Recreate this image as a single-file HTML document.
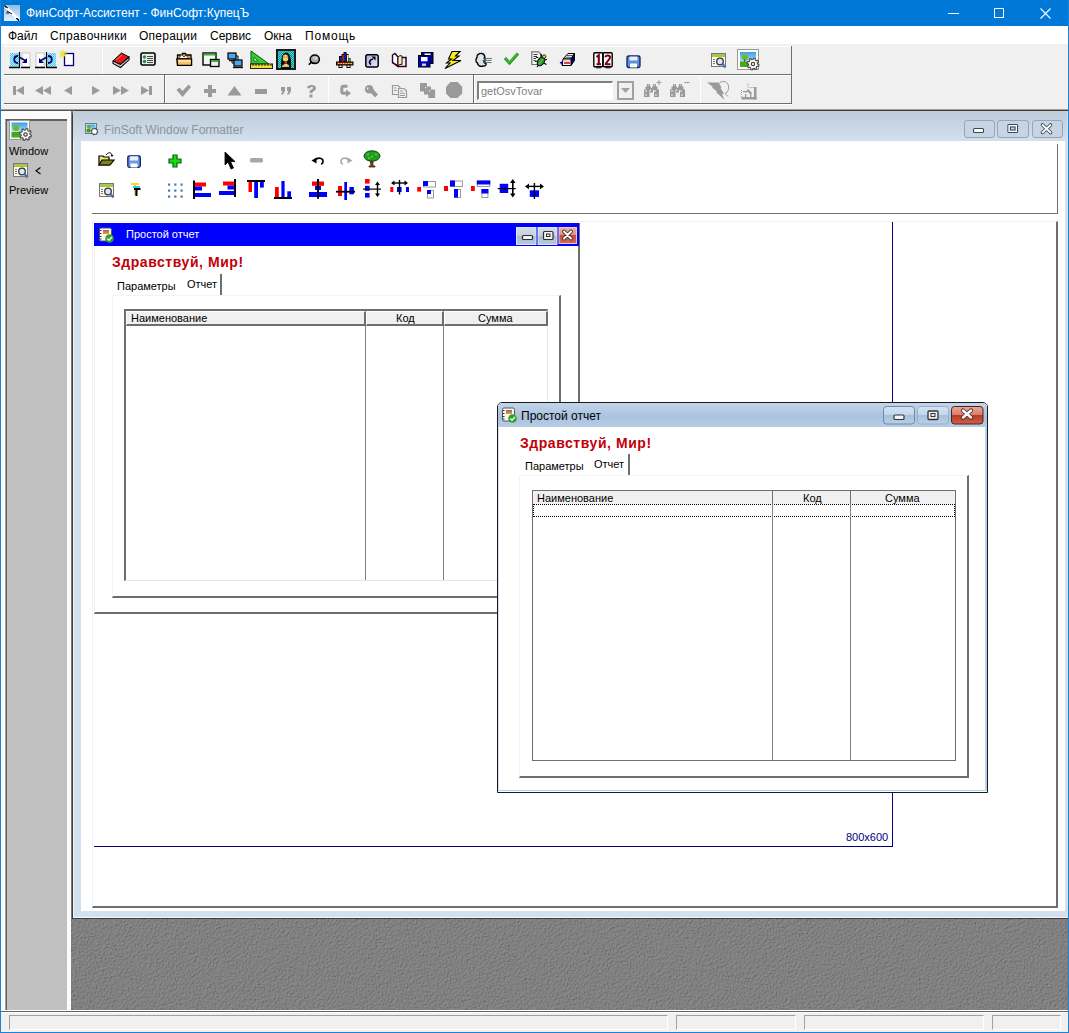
<!DOCTYPE html>
<html><head><meta charset="utf-8">
<style>
*{margin:0;padding:0;box-sizing:border-box}
html,body{width:1069px;height:1033px;overflow:hidden;background:#F0F0F0;font-family:"Liberation Sans",sans-serif;font-size:12px;color:#000}
.a{position:absolute}
.t{position:absolute;white-space:nowrap;line-height:1}
svg{position:absolute;overflow:visible}
</style></head><body>
<svg width="0" height="0" style="position:absolute"><defs><linearGradient id="sky" x1="0" y1="0" x2="0" y2="1"><stop offset="0" stop-color="#3AA0E0"/><stop offset="0.6" stop-color="#A8DCF4"/><stop offset="1" stop-color="#D8F0FA"/></linearGradient></defs></svg>
<!-- main window frame -->
<div class="a" style="left:0;top:0;width:1069px;height:26px;background:#0078D7"></div>
<div class="a" style="left:0;top:0;width:1px;height:1033px;background:#1883D7"></div>
<div class="a" style="left:1068px;top:0;width:1px;height:1033px;background:#1883D7"></div>
<div class="a" style="left:0;top:1032px;width:1069px;height:1px;background:#1883D7"></div>
<!-- title -->
<div class="t" style="left:26px;top:7px;font-size:12px;color:#fff">ФинСофт-Ассистент - ФинСофт:КупецЪ</div>
<!-- caption buttons -->
<div class="a" style="left:948px;top:13px;width:11px;height:1px;background:#fff"></div>
<div class="a" style="left:994px;top:8px;width:10px;height:10px;border:1px solid #fff"></div>
<svg style="left:1040px;top:8px" width="11" height="11"><path d="M0.5 0.5L10.5 10.5M10.5 0.5L0.5 10.5" stroke="#fff" stroke-width="1.1"/></svg>
<!-- menu -->
<div class="a" style="left:1px;top:26px;width:1067px;height:18px;background:#fff"></div>
<div class="t" style="left:8px;top:30px">Файл</div>
<div class="t" style="left:50px;top:30px;letter-spacing:0.4px">Справочники</div>
<div class="t" style="left:139px;top:30px;letter-spacing:0.25px">Операции</div>
<div class="t" style="left:210px;top:30px">Сервис</div>
<div class="t" style="left:264px;top:30px">Окна</div>
<div class="t" style="left:305px;top:30px;letter-spacing:0.8px">Помощь</div>

<!-- toolbars -->
<div class="a" style="left:4px;top:46px;width:788px;height:1px;background:#fff"></div>
<div class="a" style="left:4px;top:74px;width:788px;height:1px;background:#6E6E6E"></div>
<div class="a" style="left:4px;top:75px;width:788px;height:1px;background:#fff"></div>
<div class="a" style="left:4px;top:103px;width:788px;height:1px;background:#6E6E6E"></div>
<div class="a" style="left:4px;top:104px;width:788px;height:1px;background:#fff"></div>
<div class="a" style="left:791px;top:46px;width:1px;height:58px;background:#6E6E6E"></div>
<div class="a" style="left:164px;top:75px;width:1px;height:28px;background:#6E6E6E"></div>
<div class="a" style="left:165px;top:75px;width:1px;height:28px;background:#fff"></div>
<div class="a" style="left:473px;top:75px;width:1px;height:28px;background:#6E6E6E"></div>
<div class="a" style="left:474px;top:75px;width:1px;height:28px;background:#fff"></div>
<div class="a" style="left:102px;top:47px;width:1px;height:27px;background:#fff"></div>
<div class="a" style="left:328px;top:76px;width:1px;height:27px;background:#fff"></div>
<div class="a" style="left:700px;top:76px;width:1px;height:27px;background:#fff"></div>
<!-- combo -->
<div class="a" style="left:477px;top:81px;width:136px;height:19px;background:#fff;border-top:2px solid #808080;border-left:2px solid #808080;border-bottom:1px solid #fff;border-right:1px solid #fff"></div>
<div class="t" style="left:481px;top:86px;font-size:11px;color:#808080">getOsvTovar</div>
<div class="a" style="left:617px;top:81px;width:17px;height:19px;border:2px solid #A0A0A0;background:#F0F0F0"></div>
<svg style="left:621px;top:88px" width="9" height="5"><path d="M0 0H9L4.5 5Z" fill="#A0A0A0"/></svg>

<!-- MDI top line -->
<div class="a" style="left:1px;top:109px;width:1067px;height:1px;background:#A0A0A0"></div>
<div class="a" style="left:1px;top:110px;width:1067px;height:1px;background:#555"></div>

<!-- left panel -->
<div class="a" style="left:1px;top:111px;width:70px;height:900px;background:#FBFBFB"></div>
<div class="a" style="left:5px;top:119px;width:62px;height:891px;background:#C0C0C0;border-top:1px solid #606060;border-left:1px solid #A0A0A0;box-shadow:inset 1px 1px 0 #606060"></div>
<div class="t" style="left:9px;top:146px;font-size:11px">Window</div>
<div class="t" style="left:9px;top:185px;font-size:11px">Preview</div>
<svg style="left:35px;top:167px" width="6" height="8"><path d="M5.5 0.5L1 3.8L5.5 7" stroke="#000" stroke-width="1.1" fill="none"/></svg>

<!-- MDI client background -->
<div class="a" style="left:71px;top:111px;width:997px;height:900px;background:#7E7E7E"></div>
<svg style="left:71px;top:111px" width="997" height="900"><filter id="tx" x="0" y="0" width="100%" height="100%" color-interpolation-filters="sRGB"><feTurbulence type="fractalNoise" baseFrequency="0.65" numOctaves="3" seed="3" result="n"/><feDiffuseLighting in="n" lighting-color="#fff" surfaceScale="1.6" diffuseConstant="1" result="l"><feDistantLight azimuth="225" elevation="55"/></feDiffuseLighting><feColorMatrix type="matrix" values="0.24 0 0 0 0.31  0.24 0 0 0 0.31  0.24 0 0 0 0.31  0 0 0 0 1"/></filter><rect width="996" height="900" filter="url(#tx)"/></svg>

<!-- child window FinSoft Window Formatter -->
<div class="a" style="left:71px;top:112px;width:1px;height:807px;background:#7A7A7A"></div>
<div class="a" id="cw" style="left:72px;top:110px;width:996px;height:809px;background:#D3E0EE;border-left:1px solid #3C3C3C;border-top:1px solid #3C3C3C;border-bottom:1px solid #3C3C3C;border-top-left-radius:5px;box-shadow:inset 1px 0 0 #F4F8FC, inset 0 -1px 0 #F4F8FC"></div>
<div class="a" style="left:73px;top:111px;width:994px;height:30px;background:linear-gradient(#BFCCDA,#D3DFEC)"></div>
<div class="t" style="left:104px;top:124px;font-size:12px;color:#8A95A0">FinSoft Window Formatter</div>
<!-- child buttons -->
<div class="a" style="left:964px;top:120px;width:31px;height:18px;border:1px solid #93A6BC;border-radius:3px;background:#C6D4E3"></div>
<div class="a" style="left:997px;top:120px;width:32px;height:18px;border:1px solid #93A6BC;border-radius:3px;background:#C6D4E3"></div>
<div class="a" style="left:1032px;top:120px;width:31px;height:18px;border:1px solid #93A6BC;border-radius:3px;background:#C6D4E3"></div>
<svg style="left:972px;top:123px" width="90" height="12">
 <rect x="1.5" y="5.5" width="10" height="4" rx="1" fill="#fff" stroke="#3C4652" stroke-width="1.1"/>
 <rect x="36" y="1.5" width="9.5" height="8" rx="1" fill="none" stroke="#3C4652" stroke-width="1.2"/><rect x="37" y="2.5" width="7.5" height="6" fill="none" stroke="#fff" stroke-width="1"/><rect x="38.5" y="4" width="4.5" height="3" fill="none" stroke="#3C4652" stroke-width="1"/>
 <path d="M70.5 2L78.5 9.5M78.5 2L70.5 9.5" stroke="#3C4652" stroke-width="3.6" stroke-linecap="round"/><path d="M70.5 2L78.5 9.5M78.5 2L70.5 9.5" stroke="#fff" stroke-width="1.8" stroke-linecap="round"/>
</svg>

<!-- child content -->
<div class="a" style="left:81px;top:141px;width:984px;height:770px;background:#fff"></div>
<!-- toolbar panel border -->
<div class="a" style="left:92px;top:213px;width:966px;height:1px;background:#6E6E6E"></div>
<div class="a" style="left:1057px;top:144px;width:1px;height:70px;background:#6E6E6E"></div>
<!-- design area border -->
<div class="a" style="left:92px;top:221px;width:966px;height:687px;border-right:2px solid #6E6E6E;border-bottom:2px solid #6E6E6E;border-top:1px solid #F2F2F2;border-left:1px solid #F2F2F2"></div>

<!-- canvas lines 800x600 -->
<div class="a" style="left:892px;top:222px;width:1px;height:625px;background:#000080"></div>
<div class="a" style="left:94px;top:846px;width:799px;height:1px;background:#000080"></div>
<div class="t" style="left:846px;top:832px;font-size:11px;color:#000080">800x600</div>

<!-- FORM 1 (design) -->
<div class="a" style="left:94px;top:223px;width:486px;height:391px;background:#fff;border-left:1px solid #F4F4F4;border-right:2px solid #6E6E6E;border-bottom:2px solid #6E6E6E"></div>
<div class="a" style="left:94px;top:223px;width:485px;height:23px;background:#0000FF"></div>
<div class="t" style="left:126px;top:229px;font-size:11px;color:#fff">Простой отчет</div>
<svg style="left:516px;top:227px" width="62" height="18">
 <defs><linearGradient id="b1" x1="0" y1="0" x2="0" y2="1"><stop offset="0" stop-color="#D2DEEA"/><stop offset="0.5" stop-color="#C2D0DE"/><stop offset="0.5" stop-color="#A9BBCF"/><stop offset="1" stop-color="#B8C8DA"/></linearGradient>
 <linearGradient id="b2" x1="0" y1="0" x2="0" y2="1"><stop offset="0" stop-color="#E8B0A8"/><stop offset="0.5" stop-color="#DC9080"/><stop offset="0.5" stop-color="#C4503A"/><stop offset="1" stop-color="#D06A58"/></linearGradient></defs>
 <rect x="0.5" y="0.5" width="19.5" height="17" fill="url(#b1)" stroke="#DDE8F4" stroke-width="1"/>
 <rect x="22" y="0.5" width="19" height="17" fill="url(#b1)" stroke="#DDE8F4" stroke-width="1"/>
 <rect x="43" y="0.5" width="17.5" height="16" fill="url(#b2)" stroke="#F0C8C8" stroke-width="1"/>
 <rect x="6.5" y="8.5" width="10" height="4" rx="1" fill="#F4F4F4" stroke="#2E2E2E" stroke-width="1.2"/>
 <rect x="27.5" y="4.5" width="9.5" height="8" rx="1" fill="#F4F4F4" stroke="#2E2E2E" stroke-width="1.2"/><rect x="30.5" y="7" width="3.5" height="2.5" fill="none" stroke="#2E2E2E" stroke-width="1"/>
 <path d="M48 4.5L55 11.5M55 4.5L48 11.5" stroke="#3A2A2A" stroke-width="3.8" stroke-linecap="round"/><path d="M48 4.5L55 11.5M55 4.5L48 11.5" stroke="#fff" stroke-width="2" stroke-linecap="round"/>
</svg>
<div class="t" style="left:112px;top:255px;font-size:14px;font-weight:bold;color:#C40008;letter-spacing:0.55px">Здравствуй, Мир!</div>
<div class="t" style="left:117px;top:281px;font-size:11px">Параметры</div>
<div class="t" style="left:187px;top:279px;font-size:11px">Отчет</div>
<div class="a" style="left:220px;top:274px;width:2px;height:21px;background:#6E6E6E"></div>
<div class="a" style="left:112px;top:295px;width:449px;height:303px;border-right:2px solid #6E6E6E;border-bottom:2px solid #6E6E6E;border-top:1px solid #F4F4F4;border-left:1px solid #F4F4F4"></div>
<!-- grid1 -->
<div class="a" style="left:124px;top:309px;width:424px;height:272px;border-left:2px solid #6E6E6E;border-top:2px solid #6E6E6E;border-right:1px solid #E8E8E8;border-bottom:1px solid #E8E8E8"></div>
<div class="a" style="left:126px;top:311px;width:240px;height:15px;background:#F0F0F0;border-right:2px solid #6E6E6E;border-bottom:2px solid #6E6E6E;border-top:1px solid #fff;border-left:1px solid #fff"></div>
<div class="a" style="left:366px;top:311px;width:78px;height:15px;background:#F0F0F0;border-right:2px solid #6E6E6E;border-bottom:2px solid #6E6E6E;border-top:1px solid #fff;border-left:1px solid #fff"></div>
<div class="a" style="left:444px;top:311px;width:104px;height:15px;background:#F0F0F0;border-right:2px solid #6E6E6E;border-bottom:2px solid #6E6E6E;border-top:1px solid #fff;border-left:1px solid #fff"></div>
<div class="t" style="left:131px;top:313px;font-size:11px">Наименование</div>
<div class="t" style="left:396px;top:313px;font-size:11px">Код</div>
<div class="t" style="left:478px;top:313px;font-size:11px">Сумма</div>
<div class="a" style="left:365px;top:326px;width:1px;height:254px;background:#808080"></div>
<div class="a" style="left:443px;top:326px;width:1px;height:254px;background:#808080"></div>

<!-- FORM 2 -->
<div class="a" style="left:497px;top:402px;width:491px;height:391px;background:#fff;border:1px solid #1A1A1A;border-top-left-radius:5px;border-top-right-radius:5px"></div>
<div class="a" style="left:498px;top:403px;width:489px;height:24px;background:linear-gradient(#C3D5EA,#A9C2DE 60%,#B7CDE6);border-top-left-radius:4px;border-top-right-radius:4px"></div>
<div class="a" style="left:498px;top:427px;width:489px;height:364px;border-left:1px solid #D8DCF0;border-right:2px solid #B9D1EA;border-bottom:1px solid #9FE0F0"></div>
<div class="t" style="left:521px;top:410px;font-size:12px;color:#000">Простой отчет</div>
<svg style="left:883px;top:406px" width="101" height="19">
 <defs><linearGradient id="b3" x1="0" y1="0" x2="0" y2="1"><stop offset="0" stop-color="#D4E3F3"/><stop offset="0.5" stop-color="#C2D6EC"/><stop offset="0.5" stop-color="#A6C0DC"/><stop offset="1" stop-color="#B8CFE8"/></linearGradient>
 <linearGradient id="b4" x1="0" y1="0" x2="0" y2="1"><stop offset="0" stop-color="#E8A898"/><stop offset="0.5" stop-color="#D87C68"/><stop offset="0.5" stop-color="#B83A22"/><stop offset="1" stop-color="#D0604A"/></linearGradient></defs>
 <rect x="0.5" y="0.5" width="31" height="17.5" rx="3" fill="url(#b3)" stroke="#7088A8" stroke-width="1"/>
 <rect x="34.5" y="0.5" width="31" height="17.5" rx="3" fill="url(#b3)" stroke="#98B0CC" stroke-width="1"/>
 <rect x="68.5" y="0.5" width="31.5" height="17.5" rx="3" fill="url(#b4)" stroke="#4A2418" stroke-width="1"/>
 <rect x="11" y="9" width="10" height="4.5" rx="1" fill="#F4F4F4" stroke="#333" stroke-width="1.2"/>
 <rect x="45" y="5" width="10" height="8.5" rx="1" fill="#EEE" stroke="#333" stroke-width="1.3"/><rect x="48" y="7.5" width="4" height="3" fill="none" stroke="#333" stroke-width="1"/>
 <path d="M80 4.5L88 11.5M88 4.5L80 11.5" stroke="#4A2A2A" stroke-width="4.2" stroke-linecap="round"/><path d="M80 4.5L88 11.5M88 4.5L80 11.5" stroke="#fff" stroke-width="2.4" stroke-linecap="round"/>
</svg>
<div class="t" style="left:520px;top:436px;font-size:14px;font-weight:bold;color:#C40008;letter-spacing:0.55px">Здравствуй, Мир!</div>
<div class="t" style="left:525px;top:461px;font-size:11px">Параметры</div>
<div class="t" style="left:594px;top:459px;font-size:11px">Отчет</div>
<div class="a" style="left:628px;top:454px;width:2px;height:21px;background:#6E6E6E"></div>
<div class="a" style="left:519px;top:475px;width:450px;height:303px;border-right:2px solid #6E6E6E;border-bottom:2px solid #6E6E6E;border-top:1px solid #F4F4F4;border-left:1px solid #F4F4F4"></div>
<!-- grid2 -->
<div class="a" style="left:532px;top:490px;width:424px;height:271px;border:1px solid #6E6E6E"></div>
<div class="a" style="left:533px;top:491px;width:240px;height:13px;background:#F0F0F0;border-right:1px solid #6E6E6E"></div>
<div class="a" style="left:773px;top:491px;width:78px;height:13px;background:#F0F0F0;border-right:1px solid #6E6E6E"></div>
<div class="a" style="left:851px;top:491px;width:104px;height:13px;background:#F0F0F0"></div>
<div class="t" style="left:537px;top:493px;font-size:11px">Наименование</div>
<div class="t" style="left:803px;top:493px;font-size:11px">Код</div>
<div class="t" style="left:885px;top:493px;font-size:11px">Сумма</div>
<div class="a" style="left:533px;top:504px;width:422px;height:13px;border-top:1px dotted #000;border-bottom:1px dotted #000;border-left:1px dotted #000;border-right:1px dotted #000"></div>
<div class="a" style="left:772px;top:504px;width:1px;height:256px;background:#808080"></div>
<div class="a" style="left:850px;top:504px;width:1px;height:256px;background:#808080"></div>


<!-- ICONS -->
<!-- title icon -->
<svg style="left:4px;top:5px" width="16" height="16"><defs><linearGradient id="tg" x1="0" y1="0" x2="0" y2="1"><stop offset="0" stop-color="#8FBCE6"/><stop offset="1" stop-color="#E4F2FF"/></linearGradient></defs><rect width="16" height="16" fill="url(#tg)"/><path d="M1 1L15 15" stroke="#fff" stroke-width="3"/><path d="M1 1L4 3M12 13L15 16M3 6L8 9M2 8H5" stroke="#111" stroke-width="1"/><path d="M0.5 0.5L2.5 2.5M13 13.5L15 15.5" stroke="#000" stroke-width="1.5"/></svg>

<!-- ROW 1 toolbar icons -->
<svg style="left:9px;top:52px" width="22" height="17">
 <defs><pattern id="cy" width="2" height="2" patternUnits="userSpaceOnUse"><rect width="2" height="2" fill="#A8F0F8"/><rect width="1" height="1" fill="#5CC8E0"/><rect x="1" y="1" width="1" height="1" fill="#5CC8E0"/></pattern></defs>
 <rect x="1" y="1" width="9" height="14" fill="url(#cy)"/><rect x="13" y="1" width="8" height="14" fill="#fff" stroke="#C8C8C8" stroke-width="1"/>
 <path d="M10.5 0V16" stroke="#000" stroke-width="1.2"/><path d="M0 15.5H11M12 15.5H21" stroke="#000" stroke-width="1.3"/>
 <path d="M9 4C4 4 4 11 9 11" stroke="#000080" stroke-width="1.8" fill="none"/><path d="M10 5L17 9" stroke="#000080" stroke-width="1.5"/><path d="M18 6V11H13Z" fill="#000080"/>
</svg>
<svg style="left:35px;top:52px" width="22" height="17">
 <rect x="1" y="1" width="8" height="14" fill="#fff" stroke="#C8C8C8" stroke-width="1"/><rect x="12" y="1" width="9" height="14" fill="url(#cy)"/>
 <path d="M11.5 0V16" stroke="#000" stroke-width="1.2"/><path d="M0 15.5H10M11 15.5H22" stroke="#000" stroke-width="1.3"/>
 <path d="M13 4C18 4 18 11 13 11" stroke="#000080" stroke-width="1.8" fill="none"/><path d="M12 5L5 9" stroke="#000080" stroke-width="1.5"/><path d="M4 6V11H9Z" fill="#000080"/>
</svg>
<svg style="left:59px;top:50px" width="16" height="19">
 <rect x="5.5" y="3.5" width="9" height="12" fill="#fff" stroke="#000080" stroke-width="1.3"/>
 <path d="M4 0V8M0 4H8M1 1L7 7M7 1L1 7" stroke="#F0E040" stroke-width="1.2"/>
</svg>
<svg style="left:112px;top:52px" width="18" height="17"><path d="M1 9L9.5 1L17 5L8.5 12.5Z" fill="#E81818" stroke="#000" stroke-width="1"/><path d="M1 9V11.5L8.5 15.5L17 7.8V5L8.5 12.5Z" fill="#fff" stroke="#000" stroke-width="1.1"/><path d="M2 10.5L8.5 14L16 7" stroke="#999" stroke-width="0.8" fill="none"/><path d="M4 8L10 3" stroke="#FF7070" stroke-width="1"/></svg>
<svg style="left:140px;top:52px" width="16" height="14">
 <rect x="1" y="1" width="14" height="12" rx="1.5" fill="#E8F0E8" stroke="#000" stroke-width="1.6"/>
 <circle cx="4.5" cy="5" r="1.7" fill="#2A8A50"/><circle cx="4.5" cy="9.5" r="1.7" fill="#2A8A50"/>
 <path d="M7 4.5H13M7 6.5H13M7 8.5H13M7 10.5H13" stroke="#333" stroke-width="0.9"/>
</svg>
<svg style="left:176px;top:52px" width="17" height="15"><path d="M1.5 3H5.5L6.5 1.5H9.5L10.5 3H15V13H1.5Z" fill="#E8A840" stroke="#000" stroke-width="1.3"/><path d="M3 6.5L5.5 2.5L8 5L10 3L12.5 6.5Z" fill="#fff" stroke="#333" stroke-width="0.9"/><path d="M0.8 6.8H15.6V13.3H1.6Z" fill="#F8C060" stroke="#000" stroke-width="1.3"/><rect x="2.5" y="8" width="12" height="2" fill="#FCE0A8"/></svg>
<svg style="left:202px;top:52px" width="18" height="15">
 <rect x="1" y="1" width="13" height="12" fill="#F4F4F4" stroke="#000" stroke-width="1.4"/><rect x="1.5" y="1.5" width="12" height="2" fill="#38B038"/>
 <rect x="8.5" y="7.5" width="8.5" height="7" fill="#EEE" stroke="#000" stroke-width="1.3"/><rect x="9" y="8" width="7.5" height="2" fill="#38B038"/>
</svg>
<svg style="left:227px;top:52px" width="17" height="16">
 <rect x="1" y="1" width="8" height="6" fill="#4AA8F0" stroke="#000" stroke-width="1.2"/><path d="M2 8.5H9" stroke="#000" stroke-width="1.3"/>
 <rect x="7" y="8" width="8" height="6" fill="#4AA8F0" stroke="#000" stroke-width="1.2"/><path d="M6 15.5H16" stroke="#000" stroke-width="1.3"/>
 <path d="M5 9V11H7M9 4H11V8" stroke="#000" stroke-width="1" fill="none"/>
</svg>
<svg style="left:250px;top:50px" width="23" height="19">
 <path d="M1 1V14H19Z" fill="#30D030" stroke="#105010" stroke-width="1"/><path d="M4 7V11H8Z" fill="#E8F8E8" stroke="#105010" stroke-width="0.8"/>
 <rect x="0.5" y="14" width="22" height="4.5" fill="#F0E030" stroke="#222" stroke-width="1"/>
 <path d="M3 14V16M6 14V16M9 14V16M12 14V16M15 14V16M18 14V16M21 14V16" stroke="#222" stroke-width="1"/>
</svg>
<svg style="left:276px;top:49px" width="20" height="21"><defs><pattern id="tl" width="2" height="2" patternUnits="userSpaceOnUse"><rect width="2" height="2" fill="#40D8D8"/><rect width="1" height="1" fill="#109898"/><rect x="1" y="1" width="1" height="1" fill="#109898"/></pattern></defs><rect x="1" y="1" width="18" height="19" fill="url(#tl)" stroke="#1A1A1A" stroke-width="2"/><path d="M5 20C5 12 5 4 10 3.5C15 4 15.5 12 15 20Z" fill="#0A0A0A"/><ellipse cx="9.5" cy="9" rx="2.8" ry="3.6" fill="#F0D070"/><path d="M7.5 8H8.5M10.5 8H11.5" stroke="#502010" stroke-width="1"/><rect x="8.5" y="13" width="2.5" height="2" fill="#C03010"/><path d="M6 18C6 16 8 15 10 15C12 15 13 16 13 18Z" fill="#F8E8A0"/><path d="M7.5 17H8.5M9.5 17H10.5M11.5 17H12" stroke="#A04010" stroke-width="1"/></svg>
<svg style="left:308px;top:54px" width="12" height="12"><ellipse cx="6.8" cy="5.3" rx="4.6" ry="4.3" fill="#A8A8A8" stroke="#000" stroke-width="1.5"/><path d="M3 7C3 9 5 9.5 7 9" stroke="#000" stroke-width="1.5" fill="none"/><path d="M3.5 8L0.8 10.8" stroke="#000" stroke-width="1.6"/><ellipse cx="7.5" cy="4.2" rx="2.3" ry="1.6" fill="#D0D0D0"/></svg>
<svg style="left:336px;top:51px" width="18" height="17"><path d="M3 11V5H5.5V3H7.5V1H10.5V3H12.5V7H14.5V11Z" fill="#000"/><rect x="4" y="6" width="2" height="5" fill="#1A1A90"/><rect x="6" y="4" width="2" height="7" fill="#B01818"/><rect x="8" y="2" width="2.5" height="9" fill="#1A1A90"/><rect x="11" y="4" width="1.3" height="7" fill="#F0F0A0"/><rect x="12.5" y="7.5" width="1.5" height="3.5" fill="#30B030"/><rect x="0.5" y="11" width="16.5" height="3" fill="#B84010" stroke="#000" stroke-width="1"/><path d="M2 12.5H16" stroke="#F8E080" stroke-width="1" stroke-dasharray="1.3 1.2"/><rect x="3" y="14" width="3" height="2.5" fill="#fff" stroke="#000" stroke-width="1"/><rect x="11" y="14" width="3" height="2.5" fill="#fff" stroke="#000" stroke-width="1"/></svg>
<svg style="left:365px;top:54px" width="14" height="14"><defs><linearGradient id="lv" x1="0" y1="0" x2="1" y2="1"><stop offset="0" stop-color="#A8A8E8"/><stop offset="1" stop-color="#E8E8FF"/></linearGradient></defs><rect x="0.8" y="0.8" width="12.4" height="12.2" rx="2" fill="url(#lv)" stroke="#000" stroke-width="1.5"/><path d="M6 10.5C3.5 9 4.5 5.5 8 5" stroke="#000" stroke-width="1.6" fill="none"/><path d="M6.5 2.5H10.5V6.5Z" fill="#000"/></svg>
<svg style="left:391px;top:52px" width="17" height="16"><path d="M1.5 3L4 1.5L7 5V14L4 12L1.5 10.5Z" fill="#fff" stroke="#300028" stroke-width="1.4"/><path d="M7 5C8 3.5 10 3.5 11 4V12.5C10 12 8 12.5 7 14Z" fill="#F4F0B0" stroke="#300028" stroke-width="1"/><path d="M11 5.5H15V14.5H7L1.5 10.5" fill="none" stroke="#300028" stroke-width="1.5"/></svg>
<svg style="left:418px;top:52px" width="16" height="16"><rect x="3.5" y="0.5" width="11.5" height="11" fill="#0000A8" stroke="#000" stroke-width="1"/><rect x="6.5" y="1.5" width="6" height="2.2" fill="#fff"/><rect x="0.5" y="3.5" width="11.5" height="11.5" fill="#0000B8" stroke="#000" stroke-width="1"/><rect x="3" y="5" width="6.5" height="4.3" fill="#fff"/><rect x="4" y="11.5" width="4" height="2.5" fill="#C8C8F0"/></svg>
<svg style="left:440px;top:46px" width="24" height="26"><path d="M12 5.5H20L15.5 10H19L13 14.5H21L5 22.5L10 17H6.5L11.5 13H8.5Z" fill="#F8F018" stroke="#000" stroke-width="1.1" stroke-linejoin="miter"/></svg>
<svg style="left:475px;top:52px" width="18" height="16"><path d="M7 1.5C4 1 1.5 3 2 5.5C0.5 7 0.5 10 2.5 11C2.5 13.5 5.5 15 8 14C10 14.5 11.5 13 11 11.5C9.5 11 8.5 10 9 9H10V6H9.5C10 4.5 10 2.5 7 1.5Z" fill="#D8E4EC" stroke="#000" stroke-width="1.4"/><path d="M5 6C6 5 7 5.5 7 6.5" stroke="#fff" stroke-width="1" fill="none"/><path d="M8 6.5H17M7.5 8.5H16.5M8 10.5H16.5" stroke="#606868" stroke-width="0.9"/></svg>
<svg style="left:504px;top:52px" width="15" height="13">
 <path d="M1 6L5.5 11L14 1.5" stroke="#209020" stroke-width="3" fill="none"/><path d="M1.5 6L5.5 10.5L13.5 1.5" stroke="#40C040" stroke-width="1.2" fill="none"/>
</svg>
<svg style="left:531px;top:51px" width="17" height="17"><path d="M0.8 0.8H7.5L9.5 2.8V13.5H0.8Z" fill="#F8F8F8" stroke="#707070" stroke-width="1.2"/><path d="M2.5 3.5H6.5M2.5 5.5H6M2.5 7.5H5M2.5 9.5H4.5" stroke="#333" stroke-width="1"/><path d="M7.5 7L5 6M6.5 10L4 10.5M8 13L6 16M12.5 12L15.5 13.5M13.5 9L16 8.5M11 6L10 3" stroke="#000" stroke-width="1.1"/><ellipse cx="10" cy="10.5" rx="3.2" ry="4.8" transform="rotate(35 10 10.5)" fill="#2A9A2A" stroke="#000" stroke-width="1"/><path d="M8.5 13L11.5 8" stroke="#70D070" stroke-width="1"/><circle cx="13.2" cy="5.6" r="1.7" fill="#E8E020" stroke="#000" stroke-width="0.8"/></svg>
<svg style="left:559px;top:52px" width="17" height="15"><path d="M4 7L9 1.5H15.5L12 7Z" fill="#F0F0F0" stroke="#000" stroke-width="1"/><path d="M8 3.5H14.5M6.5 5.3H13" stroke="#606060" stroke-width="1"/><path d="M12 7L15.5 1.5V8.5L12 13.5Z" fill="#000088" stroke="#000" stroke-width="1"/><path d="M4 7H12V13.5H3Z" fill="#fff" stroke="#000" stroke-width="1"/><path d="M0.5 10.5L4 9V13.5Z" fill="#000088"/><rect x="5" y="10" width="6" height="2" fill="#E04040"/><path d="M5 9H11" stroke="#A0A0A0" stroke-width="0.8"/></svg>
<svg style="left:593px;top:52px" width="21" height="17"><rect x="0.8" y="0.8" width="9" height="14" rx="1" fill="#fff" stroke="#000" stroke-width="1.4"/><rect x="10.2" y="0.8" width="9" height="14" rx="1" fill="#fff" stroke="#000" stroke-width="1.4"/><path d="M3 15.8H8M12.5 15.8H17.5" stroke="#000" stroke-width="1"/><path d="M3.5 5L5.8 3.2V12.5M3.5 12.3H8" stroke="#800010" stroke-width="2.1" fill="none"/><path d="M12.5 5.2C12.5 2.8 17 2.8 17 5.5C17 7.8 12.8 10 12.8 12.3H17.5" stroke="#800010" stroke-width="2.1" fill="none"/></svg>
<svg style="left:626px;top:55px" width="15" height="13">
 <rect x="1" y="1" width="13" height="11.5" rx="1.5" fill="#5A8ED8" stroke="#102060" stroke-width="1.3"/><rect x="3.5" y="1.5" width="8" height="4" fill="#E8F0FF"/><rect x="4" y="8.5" width="7" height="4" fill="#fff"/>
</svg>
<svg style="left:711px;top:53px" width="16" height="16">
 <rect x="0.5" y="0.5" width="14" height="13" fill="#FAFAF0" stroke="#777" stroke-width="1"/><rect x="1" y="1" width="13" height="3" fill="#A8C840"/>
 <path d="M2 6.5H4M2 8.5H4M2 10.5H4" stroke="#555" stroke-width="0.8"/>
 <circle cx="9" cy="8.5" r="3.3" fill="#D8E8F8" stroke="#333" stroke-width="1.3"/><path d="M11.5 11L14.5 14.5" stroke="#5070B0" stroke-width="2.4"/>
</svg>
<svg style="left:737px;top:49px" width="22" height="21"><rect x="0.5" y="0.5" width="21" height="20" fill="#fff" stroke="#999" stroke-width="1"/><rect x="3" y="3" width="16" height="15" fill="url(#sky)"/><circle cx="8" cy="8.5" r="3" fill="#70B828"/><rect x="3" y="12.5" width="9" height="5.5" fill="#48A818"/><path d="M7.5 10V13" stroke="#3A7010" stroke-width="1"/><path d="M20.50 15.00 L21.96 15.71 L21.54 17.30 L19.93 17.20 L19.18 18.18 L19.71 19.71 L18.30 20.54 L17.22 19.33 L16.00 19.50 L15.29 20.96 L13.70 20.54 L13.80 18.93 L12.82 18.18 L11.29 18.71 L10.46 17.30 L11.67 16.22 L11.50 15.00 L10.04 14.29 L10.46 12.70 L12.07 12.80 L12.82 11.82 L12.29 10.29 L13.70 9.46 L14.78 10.67 L16.00 10.50 L16.71 9.04 L18.30 9.46 L18.20 11.07 L19.18 11.82 L20.71 11.29 L21.54 12.70 L20.33 13.78Z" fill="#fff" stroke="#4A4A4A" stroke-width="1.1"/><circle cx="16" cy="15" r="1.7" fill="none" stroke="#444" stroke-width="1.2"/></svg>

<!-- ROW 2 gray icons -->
<svg style="left:0;top:0" width="800" height="110">
 <g fill="#9A9A9A">
 <rect x="13" y="86" width="3" height="9"/><path d="M16 90.5L24 86V95Z"/>
 <path d="M35 90.5L43 86V95Z"/><path d="M43 90.5L51 86V95Z"/>
 <path d="M64 90.5L72 86V95Z"/>
 <path d="M100 90.5L92 86V95Z"/>
 <path d="M121 90.5L113 86V95Z"/><path d="M129 90.5L121 86V95Z"/>
 <path d="M149 90.5L141 86V95Z"/><rect x="149" y="86" width="3" height="9"/>
 <path d="M176.5 90L179.5 87.5L182.5 91L188.5 84.5L191 87L182.5 97Z"/>
 <path d="M208 85H212V89H216V93H212V97H208V93H204V89H208Z"/>
 <path d="M234.5 86L241.5 95.5H227.5Z"/>
 <rect x="255" y="89" width="12" height="5"/>
 <path d="M281 87H285V91L283 94.5H281L282.5 91H281ZM287 87H291V91L289 94.5H287L288.5 91H287Z"/>
 <path d="M307 88C307 84 316 84 316 88C316 91 312.5 91 312.5 93H309.5C309.5 89 313 89.5 313 88C313 86.5 310 86.5 310 88.5Z"/><rect x="309.5" y="94.5" width="3" height="3"/>
 <path d="M450.5 82H457.5L462.2 86.7V93.5L457.5 98H450.5L446 93.5V86.7Z"/>
 <rect x="420" y="83" width="7" height="8.5"/><rect x="424" y="86.5" width="7" height="8"/><rect x="428.3" y="89.5" width="6.8" height="8.5"/>
 <circle cx="369.2" cy="89.2" r="4.3"/><path d="M370 92L373 89L378 94.5L375 97.5Z"/>
 </g>
 <rect x="367" y="87.5" width="1.3" height="2" fill="#F0F0F0"/>
 <path d="M347.5 86.3H343.5Q341.8 86.3 341.8 88.3V91.3Q341.8 93.3 343.5 93.3H347" stroke="#9A9A9A" stroke-width="3" fill="none"/><path d="M346 89.5L351 93.3L346 97Z" fill="#9A9A9A"/>
 <g fill="#F0F0F0" stroke="#9A9A9A" stroke-width="1.2"><path d="M392.5 85.5H398L400 87.5V94.5H392.5Z"/><path d="M398.5 88.5H404L406.5 91V97.5H398.5Z"/></g>
 <path d="M394 88H396.5M394 90.5H397M400 91H403M400 93.3H405M400 95.5H405" stroke="#9A9A9A" stroke-width="1"/>
 <rect x="425" y="87" width="1.2" height="1.2" fill="#F0F0F0"/><rect x="429" y="90.3" width="1.2" height="1.2" fill="#F0F0F0"/>
 <g fill="#9A9A9A">
  <rect x="647" y="84" width="3" height="3"/><rect x="645.5" y="86.5" width="5.5" height="3.5"/><rect x="644" y="89.5" width="5.5" height="7.5"/><rect x="653" y="84" width="3" height="3"/><rect x="652" y="86.5" width="5.5" height="3.5"/><rect x="654" y="89.5" width="5" height="7.5"/><rect x="650" y="88" width="3" height="4.5"/>
  <rect x="673" y="84" width="3" height="3"/><rect x="671.5" y="86.5" width="5.5" height="3.5"/><rect x="670" y="89.5" width="5.5" height="7.5"/><rect x="679" y="84" width="3" height="3"/><rect x="678" y="86.5" width="5.5" height="3.5"/><rect x="680" y="89.5" width="5" height="7.5"/><rect x="676" y="88" width="3" height="4.5"/>
  <path d="M707 82.5L718.5 82.5L721.5 87.5L720.5 88L724 93.5L722 94L724.5 100L716 92L717 91.5L712 87.5L713 87Z"/>
  <rect x="741.5" y="97" width="15" height="2.5"/><rect x="754" y="87" width="2.5" height="12.5"/><path d="M746.5 90.5L748 89L752 93L750.5 94.5Z"/><rect x="745" y="94" width="1.3" height="3.5"/><rect x="750" y="94" width="1.3" height="3.5"/><rect x="743" y="91" width="4.5" height="1.3"/>
 </g>
 <path d="M659 80V85M656.5 82.5H661.5" stroke="#9A9A9A" stroke-width="1"/><path d="M684.5 82.5H689.5" stroke="#9A9A9A" stroke-width="1"/>
 <path d="M646 90V92M650.5 89.5V91M655 90V92M646 94V96M656 94V96M672 90V92M676.5 89.5V91M681 90V92M672 94V96M682 94V96" stroke="#F0F0F0" stroke-width="1"/><path d="M648 85H649M654 85H655M674 85H675M680 85H681" stroke="#F0F0F0" stroke-width="1"/>
 <path d="M719 83.5C721 80.5 727 80.5 728.5 85.5C729 89 728 92.5 725 93.5M725 93.5L728 96.5" stroke="#9A9A9A" stroke-width="1" fill="none"/>
 <path d="M741.5 90V97M748 83.5V88M749.5 87.5H754" stroke="#9A9A9A" stroke-width="1" stroke-dasharray="1 1" fill="none"/>
</svg>

<!-- left panel icons -->
<svg style="left:9px;top:120px" width="23" height="21"><rect x="0.5" y="0.5" width="20" height="19" fill="#fff" stroke="#999" stroke-width="1"/><rect x="2.5" y="2.5" width="16" height="15" fill="url(#sky)"/><circle cx="7" cy="8" r="3" fill="#70B828"/><rect x="2.5" y="12" width="9" height="5.5" fill="#48A818"/><path d="M21.00 14.50 L22.46 15.21 L22.04 16.80 L20.43 16.70 L19.68 17.68 L20.21 19.21 L18.80 20.04 L17.72 18.83 L16.50 19.00 L15.79 20.46 L14.20 20.04 L14.30 18.43 L13.32 17.68 L11.79 18.21 L10.96 16.80 L12.17 15.72 L12.00 14.50 L10.54 13.79 L10.96 12.20 L12.57 12.30 L13.32 11.32 L12.79 9.79 L14.20 8.96 L15.28 10.17 L16.50 10.00 L17.21 8.54 L18.80 8.96 L18.70 10.57 L19.68 11.32 L21.21 10.79 L22.04 12.20 L20.83 13.28Z" fill="#fff" stroke="#4A4A4A" stroke-width="1.1"/><circle cx="16.5" cy="14.5" r="1.7" fill="none" stroke="#444" stroke-width="1.2"/></svg>
<svg style="left:13px;top:163px" width="16" height="16">
 <rect x="0.5" y="0.5" width="14" height="13" fill="#FAFAF0" stroke="#777" stroke-width="1"/><rect x="1" y="1" width="13" height="3" fill="#A8C840"/>
 <path d="M2 6.5H4M2 8.5H4M2 10.5H4" stroke="#555" stroke-width="0.8"/>
 <circle cx="9" cy="8.5" r="3.3" fill="#D8E8F8" stroke="#333" stroke-width="1.3"/><path d="M11.5 11L14.5 14.5" stroke="#5070B0" stroke-width="2.4"/>
</svg>

<!-- child window title icon -->
<svg style="left:85px;top:123px" width="13" height="12">
 <rect x="0.5" y="0.5" width="11" height="10" fill="#fff" stroke="#778" stroke-width="1"/><rect x="1.5" y="1.5" width="9" height="8" fill="url(#sky)"/><circle cx="4" cy="4" r="1.8" fill="#60B020"/><rect x="1.5" y="6" width="4" height="3.5" fill="#40A010"/>
 <path d="M12.10 8.50 L12.88 8.90 L12.64 9.80 L11.77 9.77 L11.34 10.34 L11.60 11.17 L10.80 11.64 L10.21 11.00 L9.50 11.10 L9.10 11.88 L8.20 11.64 L8.23 10.77 L7.66 10.34 L6.83 10.60 L6.36 9.80 L7.00 9.21 L6.90 8.50 L6.12 8.10 L6.36 7.20 L7.23 7.23 L7.66 6.66 L7.40 5.83 L8.20 5.36 L8.79 6.00 L9.50 5.90 L9.90 5.12 L10.80 5.36 L10.77 6.23 L11.34 6.66 L12.17 6.40 L12.64 7.20 L12.00 7.79Z" fill="#fff" stroke="#333" stroke-width="1"/>
</svg>

<!-- child toolbar row1 -->
<svg style="left:98px;top:152px" width="17" height="15">
 <path d="M1 4H5L6 5H11V13H1Z" fill="#E8E870" stroke="#000" stroke-width="1.2"/>
 <path d="M1 13L4 8H16L12 13Z" fill="#808020" stroke="#000" stroke-width="1.2"/>
 <path d="M8 3C10 0 13 0 14 3" stroke="#000" stroke-width="1" fill="none"/><path d="M12.5 3H15.5L14 5Z" fill="#000"/>
</svg>
<svg style="left:127px;top:155px" width="14" height="13">
 <rect x="0.8" y="0.8" width="12.5" height="11.5" rx="1.5" fill="#6A9AE0" stroke="#102060" stroke-width="1.3"/><rect x="3" y="1.3" width="8" height="4.2" fill="#E8F0FF"/><rect x="3.5" y="8.5" width="7" height="4" fill="#fff"/>
</svg>
<svg style="left:168px;top:154px" width="15" height="14">
 <path d="M5 1H9V5H13V9H9V13H5V9H1V5H5Z" fill="#10E010" stroke="#106010" stroke-width="1.2"/>
</svg>
<svg style="left:224px;top:151px" width="12" height="20">
 <path d="M1 1V14L4 11L7 18L9.5 17L6.5 10.5H11Z" fill="#000" stroke="#000" stroke-width="0.8"/>
</svg>
<svg style="left:250px;top:158px" width="13" height="5"><rect x="0" y="0" width="13" height="4.5" rx="1.5" fill="#A8A8A8"/></svg>
<svg style="left:311px;top:156px" width="14" height="9">
 <path d="M4 4C7 1 12 2 12 5C12 7 11 8 10 8" stroke="#000" stroke-width="1.6" fill="none"/><path d="M0.5 4.5L5.5 1.5V7.5Z" fill="#000"/>
</svg>
<svg style="left:339px;top:156px" width="14" height="9">
 <path d="M10 4C7 1 2 2 2 5C2 7 3 8 4 8" stroke="#A8A8A8" stroke-width="1.6" fill="none"/><path d="M13.5 4.5L8.5 1.5V7.5Z" fill="#A8A8A8"/>
</svg>
<svg style="left:363px;top:150px" width="18" height="17">
 <path d="M7 9L8 16H6V17H12V16H10L10 10L12 8" fill="#884020" stroke="#402010" stroke-width="0.8"/>
 <ellipse cx="9" cy="6" rx="8" ry="5.2" fill="#20A020" stroke="#104010" stroke-width="1"/><path d="M4 5L6 4M8 7L10 6M12 4L14 5M5 8L7 8" stroke="#80E040" stroke-width="1"/>
</svg>

<!-- child toolbar row2 -->
<svg style="left:99px;top:183px" width="16" height="16">
 <rect x="0.5" y="0.5" width="14" height="13" fill="#FAFAF0" stroke="#777" stroke-width="1"/><rect x="1" y="1" width="13" height="3" fill="#A8C840"/>
 <path d="M2 6.5H4M2 8.5H4M2 10.5H4" stroke="#555" stroke-width="0.8"/>
 <circle cx="9" cy="8.5" r="3.3" fill="#D8E8F8" stroke="#333" stroke-width="1.3"/><path d="M11.5 11L14.5 14.5" stroke="#5070B0" stroke-width="2.4"/>
</svg>
<svg style="left:130px;top:182px" width="11" height="14">
 <path d="M1 1H9V3H6V13H4V3H1Z" fill="#F0E020"/><path d="M3 4H10V6H7V13.5H5V6H3Z" fill="#40C0F0"/><path d="M4 6H10.5V8H7.5V14H5.5V8H4Z" fill="#000"/>
</svg>
<g></g>
<svg style="left:0;top:0" width="1069" height="220">
 <g fill="#4A7AB0">
  <rect x="168" y="183.5" width="2.2" height="2.2"/><rect x="174.2" y="183.5" width="2.2" height="2.2"/><rect x="180.5" y="183.5" width="2.2" height="2.2"/>
  <rect x="168" y="189.5" width="2.2" height="2.2"/><rect x="174.2" y="189.5" width="2.2" height="2.2"/><rect x="180.5" y="189.5" width="2.2" height="2.2"/>
  <rect x="168" y="195.5" width="2.2" height="2.2"/><rect x="174.2" y="195.5" width="2.2" height="2.2"/><rect x="180.5" y="195.5" width="2.2" height="2.2"/>
 </g>
 <!-- align left -->
 <rect x="193" y="180.5" width="2" height="18.5" fill="#000"/><rect x="195" y="182.5" width="11" height="4" fill="#F00"/><rect x="195" y="186.5" width="7" height="4" fill="#00F"/><rect x="195" y="193" width="16" height="4" fill="#00F"/>
 <!-- align right -->
 <rect x="234" y="179" width="2" height="18" fill="#000"/><rect x="223" y="181.5" width="11" height="4" fill="#F00"/><rect x="227.5" y="185.5" width="6.5" height="4" fill="#00F"/><rect x="219" y="191" width="15" height="4" fill="#00F"/>
 <!-- align top -->
 <rect x="247" y="180" width="18" height="2" fill="#000"/><rect x="248.5" y="182" width="3.5" height="10" fill="#F00"/><rect x="254.2" y="182" width="3.8" height="16" fill="#00F"/><rect x="260" y="182" width="3.8" height="5.6" fill="#00F"/>
 <!-- align bottom -->
 <rect x="274" y="197" width="18" height="2" fill="#000"/><rect x="275" y="187" width="3.8" height="10" fill="#F00"/><rect x="281.4" y="181" width="3.2" height="16" fill="#00F"/><rect x="287.3" y="191.3" width="3.7" height="5.7" fill="#00F"/>
 <!-- center horiz -->
 <rect x="312" y="181.5" width="12" height="4.3" fill="#F00"/><rect x="315" y="186" width="6" height="4" fill="#00F"/><rect x="309" y="192" width="18" height="5" fill="#00F"/><rect x="317" y="179" width="2" height="19.7" fill="#000"/>
 <!-- center vert -->
 <rect x="338" y="186" width="4" height="10" fill="#F00"/><rect x="344.3" y="182" width="2.7" height="18" fill="#00F"/><rect x="349.4" y="187" width="4.5" height="7.3" fill="#00F"/><rect x="336" y="190.8" width="19" height="1.8" fill="#000"/>
 <!-- v spacing -->
 <rect x="365" y="179" width="4.6" height="4.6" fill="#F00"/><rect x="365" y="185.8" width="4.6" height="5" fill="#00F"/><rect x="365" y="193" width="4.6" height="4.6" fill="#00F"/><rect x="363" y="188.5" width="18" height="1.2" fill="#000"/>
 <path d="M377.5 181.5L380 185H375Z M377.5 197L380 193.5H375Z" fill="#000"/><rect x="376.8" y="184" width="1.4" height="10" fill="#000"/>
 <!-- h spacing -->
 <rect x="390.3" y="187" width="3" height="5" fill="#F00"/><rect x="397" y="187" width="4.6" height="5" fill="#00F"/><rect x="406" y="187" width="3" height="5" fill="#00F"/><rect x="398.8" y="180" width="1.4" height="14.5" fill="#000"/>
 <path d="M391 183L394.5 180.5V185.5Z M408 183L404.5 180.5V185.5Z" fill="#000"/><rect x="393" y="182.3" width="13" height="1.4" fill="#000"/>
 <!-- icon A -->
 <rect x="417.2" y="187" width="3.9" height="4.6" fill="#F00"/><rect x="423.5" y="181.5" width="12" height="5.5" fill="#fff" stroke="#999" stroke-width="1"/><rect x="423" y="181" width="5" height="5" fill="#00F"/>
 <rect x="427.5" y="190.5" width="6" height="7.5" fill="#fff" stroke="#999" stroke-width="1"/><rect x="427" y="190" width="4" height="4" fill="#00F"/>
 <!-- icon B -->
 <rect x="444" y="186" width="4" height="5" fill="#F00"/><rect x="450.5" y="181" width="12" height="5.5" fill="#fff" stroke="#999" stroke-width="1"/><rect x="450" y="180.5" width="5" height="6" fill="#00F"/>
 <rect x="454.5" y="189.5" width="6" height="8" fill="#fff" stroke="#999" stroke-width="1"/><rect x="454" y="189" width="4" height="8.5" fill="#00F"/>
 <!-- icon C -->
 <rect x="471" y="186" width="3.8" height="5" fill="#F00"/><rect x="477.3" y="181" width="12.5" height="5.5" fill="#fff" stroke="#999" stroke-width="1"/><rect x="476.8" y="180.5" width="13.5" height="4" fill="#00F"/>
 <rect x="481.9" y="189.5" width="6" height="8" fill="#fff" stroke="#999" stroke-width="1"/><rect x="481.4" y="189" width="7" height="4.5" fill="#00F"/>
 <!-- icon D -->
 <rect x="499.7" y="183.8" width="8.5" height="9.2" fill="#00F"/><rect x="497.7" y="188" width="18" height="1.2" fill="#000"/>
 <path d="M512.8 179L515.5 183H510Z M512.8 197.5L515.5 193.5H510Z" fill="#000"/><rect x="512" y="182" width="1.6" height="13" fill="#000"/>
 <!-- icon E -->
 <rect x="529.8" y="190.3" width="9.2" height="6.6" fill="#00F"/><rect x="533.7" y="183" width="1.4" height="16" fill="#000"/>
 <path d="M525 186.4L529 183.5V189.3Z M544 186.4L540 183.5V189.3Z" fill="#000"/><rect x="528" y="185.7" width="13" height="1.4" fill="#000"/>
</svg>

<!-- form icons -->
<svg style="left:98px;top:227px" width="17" height="16">
 <rect x="1.5" y="1" width="12" height="13" rx="1.5" fill="#FFF8F0" stroke="#555" stroke-width="1"/><path d="M1.5 3.5H3.5M1.5 6.5H3.5M1.5 9.5H3.5M1.5 12H3.5" stroke="#333" stroke-width="1.2"/>
 <defs><linearGradient id="pg" x1="0" y1="0" x2="0" y2="1"><stop offset="0" stop-color="#9060A0"/><stop offset="1" stop-color="#F0A020"/></linearGradient></defs>
 <rect x="5" y="3" width="6" height="4" fill="url(#pg)"/>
 <circle cx="11.5" cy="11.5" r="4.3" fill="#30A030"/><path d="M9.3 11.5L11 13.2L14 10" stroke="#E0FFD0" stroke-width="1.5" fill="none"/>
</svg>
<svg style="left:501px;top:407px" width="17" height="16">
 <rect x="1.5" y="1" width="12" height="13" rx="1.5" fill="#FFF8F0" stroke="#555" stroke-width="1"/><path d="M1.5 3.5H3.5M1.5 6.5H3.5M1.5 9.5H3.5M1.5 12H3.5" stroke="#333" stroke-width="1.2"/>
 <rect x="5" y="3" width="6" height="4" fill="url(#pg)"/>
 <circle cx="11.5" cy="11.5" r="4.3" fill="#30A030"/><path d="M9.3 11.5L11 13.2L14 10" stroke="#E0FFD0" stroke-width="1.5" fill="none"/>
</svg>

<!-- status bar -->
<div class="a" style="left:1px;top:1010px;width:1067px;height:22px;background:#F0F0F0;border-top:1px solid #fff"></div>
<div class="a" style="left:1px;top:1011px;width:1067px;height:1px;background:#646464"></div>
<div class="a" style="left:1px;top:1012px;width:1067px;height:1px;background:#fff"></div>
<div class="a" style="left:9px;top:1015px;width:659px;height:15px;border-top:1px solid #A0A0A0;border-left:1px solid #A0A0A0;border-bottom:1px solid #fff;border-right:1px solid #fff"></div>
<div class="a" style="left:676px;top:1015px;width:120px;height:15px;border-top:1px solid #A0A0A0;border-left:1px solid #A0A0A0;border-bottom:1px solid #fff;border-right:1px solid #fff"></div>
<div class="a" style="left:804px;top:1015px;width:180px;height:15px;border-top:1px solid #A0A0A0;border-left:1px solid #A0A0A0;border-bottom:1px solid #fff;border-right:1px solid #fff"></div>
<div class="a" style="left:992px;top:1015px;width:69px;height:15px;border-top:1px solid #A0A0A0;border-left:1px solid #A0A0A0;border-bottom:1px solid #fff;border-right:1px solid #fff"></div>
</body></html>
